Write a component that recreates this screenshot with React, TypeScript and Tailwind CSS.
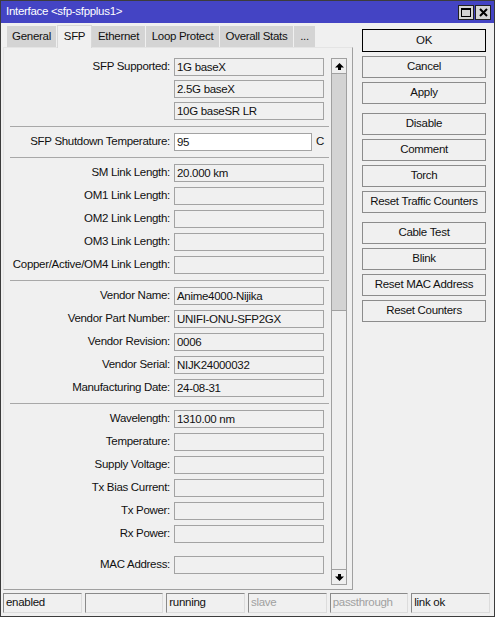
import React from 'react';

const font = { fontFamily: '"Liberation Sans", Arial, sans-serif', fontSize: '11.5px', letterSpacing: '-0.3px' };

const tabs = [
  { name: 'General', w: 'w-[50px]' },
  { name: 'SFP', w: 'w-[35px]' },
  { name: 'Ethernet', w: 'w-[54px]' },
  { name: 'Loop Protect', w: 'w-[74px]' },
  { name: 'Overall Stats', w: 'w-[74px]' },
  { name: '...', w: 'w-[22px]' },
];

type Row = { label: string; values?: string[]; value?: string };

const groups: Row[][] = [
  [{ label: 'SFP Supported:', values: ['1G baseX', '2.5G baseX', '10G baseSR LR'] }],
  [{ label: 'SFP Shutdown Temperature:', value: '95' }],
  [
    { label: 'SM Link Length:', value: '20.000 km' },
    { label: 'OM1 Link Length:', value: '' },
    { label: 'OM2 Link Length:', value: '' },
    { label: 'OM3 Link Length:', value: '' },
    { label: 'Copper/Active/OM4 Link Length:', value: '' },
  ],
  [
    { label: 'Vendor Name:', value: 'Anime4000-Nijika' },
    { label: 'Vendor Part Number:', value: 'UNIFI-ONU-SFP2GX' },
    { label: 'Vendor Revision:', value: '0006' },
    { label: 'Vendor Serial:', value: 'NIJK24000032' },
    { label: 'Manufacturing Date:', value: '24-08-31' },
  ],
  [
    { label: 'Wavelength:', value: '1310.00 nm' },
    { label: 'Temperature:', value: '' },
    { label: 'Supply Voltage:', value: '' },
    { label: 'Tx Bias Current:', value: '' },
    { label: 'Tx Power:', value: '' },
    { label: 'Rx Power:', value: '' },
  ],
];

const buttonGroups = [
  ['OK', 'Cancel', 'Apply'],
  ['Disable', 'Comment', 'Torch', 'Reset Traffic Counters'],
  ['Cable Test', 'Blink', 'Reset MAC Address', 'Reset Counters'],
];

const status = [
  { text: 'enabled', dim: false },
  { text: '', dim: false },
  { text: 'running', dim: false },
  { text: 'slave', dim: true },
  { text: 'passthrough', dim: true },
  { text: 'link ok', dim: false },
];

function Field({ value }: { value: string }) {
  return (
    <div className="w-[150px] h-[18px] border border-[#a3a3a3] bg-[#f0f0f0] pl-[2px] leading-[16px] text-[#111] whitespace-nowrap">
      {value}
    </div>
  );
}

function FormRow({ label, children }: { label: string; children: React.ReactNode }) {
  return (
    <div className="flex items-center h-[18px]">
      <div className="w-[170px] text-right pr-[4px] text-[#111] whitespace-nowrap">{label}</div>
      {children}
    </div>
  );
}

const App: React.FC = () => {
  return (
    <div style={font} className="w-[495px] h-[617px] bg-[#f0f0f0] border border-[#3c3c3c] flex flex-col select-none overflow-hidden">
      {/* Title bar */}
      <div className="h-[22px] bg-[#4444c4] flex items-center justify-between pl-[5px] pr-[3px] shrink-0">
        <span className="text-white">{'Interface <sfp-sfpplus1>'}</span>
        <div className="flex items-center gap-[1px] mt-[1px]">
          <div className="w-[16px] h-[15px] bg-[#d4d4d4] border border-[#222] flex items-center justify-center">
            <div className="w-[10px] h-[9px] border border-black border-t-2" />
          </div>
          <div className="w-[16px] h-[15px] bg-[#d4d4d4] border border-[#222] flex items-center justify-center">
            <svg width="9" height="9" viewBox="0 0 9 9">
              <path d="M1 1 L8 8 M8 1 L1 8" stroke="black" strokeWidth="2" />
            </svg>
          </div>
        </div>
      </div>

      <div className="flex flex-1 min-h-0 pl-[2px] pt-[2px]">
        {/* Left: tabs + panel */}
        <div className="w-[350px] flex flex-col">
          <div className="flex items-end h-[22px] pl-[4px]">
            {tabs.map((t) => {
              const active = t.name === 'SFP';
              return (
                <div
                  key={t.name}
                  className={
                    t.w +
                    (active
                      ? ' h-[23px] bg-[#f0f0f0] border border-b-0 border-[#d8d8d8] flex items-center justify-center text-[#111] -mb-px z-10'
                      : ' h-[21px] bg-[#d4d4d4] border-r border-[#f0f0f0] flex items-center justify-center text-[#111]')
                  }
                >
                  {t.name}
                </div>
              );
            })}
          </div>
          <div className="flex-1 flex border-r border-b border-[#a0a0a0] border-l border-l-[#e4e4e4] border-t border-t-[#e4e4e4] mb-[2px]">
            {/* Form */}
            <div className="flex-1 flex flex-col pt-[10px] overflow-hidden">
              {groups.map((g, gi) => (
                <React.Fragment key={gi}>
                  {gi > 0 && (
                    <div className="py-[6px]">
                      <div className="ml-[6px] h-px bg-[#a8a8a8]" />
                    </div>
                  )}
                  <div className={gi === 0 ? 'flex flex-col gap-[4px]' : 'flex flex-col gap-[5px]'}>
                    {g.map((r) =>
                      r.values ? (
                        <React.Fragment key={r.label}>
                          {r.values.map((v, i) => (
                            <FormRow key={v} label={i === 0 ? r.label : ''}>
                              <Field value={v} />
                            </FormRow>
                          ))}
                        </React.Fragment>
                      ) : r.label === 'SFP Shutdown Temperature:' ? (
                        <FormRow key={r.label} label={r.label}>
                          <div className="w-[138px] h-[18px] border border-[#a3a3a3] bg-white pl-[2px] leading-[16px] text-[#111]">
                            {r.value}
                          </div>
                          <span className="ml-[4px] text-[#111]">C</span>
                        </FormRow>
                      ) : (
                        <FormRow key={r.label} label={r.label}>
                          <Field value={r.value ?? ''} />
                        </FormRow>
                      )
                    )}
                  </div>
                </React.Fragment>
              ))}
              <div className="mt-[13px]">
                <FormRow label="MAC Address:">
                  <Field value="" />
                </FormRow>
              </div>
            </div>
            {/* Scrollbar */}
            <div className="w-[16px] mt-[10px] mb-[4px] mr-[5px] ml-[2px] border border-[#a0a0a0] bg-[#efefef] flex flex-col">
              <div className="h-[15px] bg-[#efefef] border-b border-[#a0a0a0] flex items-center justify-center">
                <svg width="9" height="7" viewBox="0 0 9 7">
                  <path d="M4.5 0 L9 4.5 L6 4.5 L6 7 L3 7 L3 4.5 L0 4.5 Z" fill="black" />
                </svg>
              </div>
              <div className="h-[237px] bg-[#d3d3d3] border-b border-[#a0a0a0]" />
              <div className="flex-1" />
              <div className="h-[15px] bg-[#efefef] border-t border-[#a0a0a0] flex items-center justify-center">
                <svg width="9" height="7" viewBox="0 0 9 7">
                  <path d="M4.5 7 L9 2.5 L6 2.5 L6 0 L3 0 L3 2.5 L0 2.5 Z" fill="black" />
                </svg>
              </div>
            </div>
          </div>
        </div>

        {/* Right: buttons */}
        <div className="flex-1 flex flex-col pt-[4px] pl-[9px] pr-[8px] gap-[9px]">
          {buttonGroups.map((g, gi) => (
            <div key={gi} className="flex flex-col gap-[4px]">
              {g.map((b) => (
                <div
                  key={b}
                  className={
                    (b === 'OK' ? 'h-[23px] border-black ' : 'h-[22px] border-[#8c8c8c] ') +
                    'border bg-[#f0f0f0] flex items-center justify-center text-[#111] whitespace-nowrap'
                  }
                >
                  {b}
                </div>
              ))}
            </div>
          ))}
        </div>
      </div>

      {/* Status bar */}
      <div className="h-[24px] shrink-0 flex gap-[3px] pl-[2px] pr-[4px] pb-[3px] pt-[1px]">
        {status.map((s, i) => (
          <div
            key={i}
            className={
              'flex-1 border-l border-t border-[#8a8a8a] border-r border-r-[#dcdcdc] border-b border-b-[#dcdcdc] flex items-center pl-[2px] ' +
              (s.dim ? 'text-[#a0a0a0]' : 'text-[#111]')
            }
          >
            {s.text}
          </div>
        ))}
      </div>
    </div>
  );
};

export default App;
